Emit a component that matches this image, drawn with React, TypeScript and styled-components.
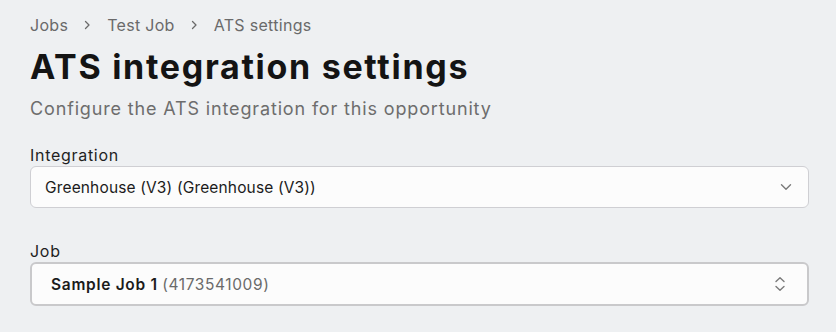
import React from 'react';
import styled, { createGlobalStyle } from 'styled-components';

const GlobalStyle = createGlobalStyle`
  html, body {
    margin: 0;
    padding: 0;
    background: #eef0f2;
    font-family: Inter, "Noto Sans", sans-serif;
    color: #1b1b1b;
  }
`;

const Page = styled.div`
  padding: 14px 27px 0 30px;
`;

const Breadcrumbs = styled.nav`
  display: flex;
  align-items: center;
  gap: 14px;
  font-size: 16px;
  letter-spacing: 0.3px;
  color: #6a6a6a;
  height: 22px;
`;

const Crumb = styled.span`
  white-space: nowrap;
`;

const Separator = styled.span`
  display: flex;
  align-items: center;
  color: #6a6a6a;
  margin: 0 2px;
`;

const Title = styled.h1`
  margin: 8px 0 0;
  font-size: 34px;
  font-weight: 700;
  letter-spacing: 1.7px;
  color: #141414;
  line-height: 46px;
`;

const Subtitle = styled.p`
  margin: 6px 0 0;
  font-size: 18px;
  letter-spacing: 0.85px;
  color: #6d6d6d;
  line-height: 26px;
`;

const Field = styled.div<{ $top: number }>`
  margin-top: ${(p) => p.$top}px;
  display: flex;
  flex-direction: column;
`;

const Label = styled.label`
  font-size: 16px;
  letter-spacing: 0.7px;
  color: #1f1f1f;
  line-height: 22px;
`;

const SelectBox = styled.div<{ $focused?: boolean }>`
  display: flex;
  align-items: center;
  justify-content: space-between;
  box-sizing: border-box;
  background: #fcfcfc;
  border: ${(p) => (p.$focused ? '2px solid #c9c9cb' : '1px solid #cfcfd3')};
  border-radius: 6px;
  height: ${(p) => (p.$focused ? 44 : 42)}px;
  padding: ${(p) => (p.$focused ? '0 21px 0 19px' : '0 16px 0 14px')};
  font-size: 15.5px;
  letter-spacing: 0.15px;
`;

const Value = styled.span`
  color: #1b1b1b;
  white-space: nowrap;
`;

const Strong = styled.span`
  font-weight: 600;
  letter-spacing: 0.7px;
`;

const Muted = styled.span`
  color: #6a6a6a;
  letter-spacing: 0.6px;
`;

const Chevron = () => (
  <svg width="12" height="8" viewBox="0 0 12 8" fill="none">
    <path d="M1.5 1.8L6 6.2L10.5 1.8" stroke="#7a7a7a" strokeWidth="1.4" strokeLinecap="round" strokeLinejoin="round" />
  </svg>
);

const UpDown = () => (
  <svg width="12" height="16" viewBox="0 0 12 16" fill="none">
    <path d="M2 5.5L6 1.8L10 5.5" stroke="#7a7a7a" strokeWidth="1.4" strokeLinecap="round" strokeLinejoin="round" />
    <path d="M2 10.5L6 14.2L10 10.5" stroke="#7a7a7a" strokeWidth="1.4" strokeLinecap="round" strokeLinejoin="round" />
  </svg>
);

const CrumbArrow = () => (
  <svg width="7" height="10" viewBox="0 0 7 10" fill="none">
    <path d="M1.5 1.5L5 5L1.5 8.5" stroke="#6a6a6a" strokeWidth="1.3" strokeLinecap="round" strokeLinejoin="round" />
  </svg>
);

export default function App() {
  return (
    <>
      <GlobalStyle />
      <Page>
        <Breadcrumbs>
          <Crumb>Jobs</Crumb>
          <Separator><CrumbArrow /></Separator>
          <Crumb>Test Job</Crumb>
          <Separator><CrumbArrow /></Separator>
          <Crumb>ATS settings</Crumb>
        </Breadcrumbs>
        <Title>ATS integration settings</Title>
        <Subtitle>Configure the ATS integration for this opportunity</Subtitle>
        <Field $top={22}>
          <Label>Integration</Label>
          <SelectBox>
            <Value>Greenhouse (V3) (Greenhouse (V3))</Value>
            <Chevron />
          </SelectBox>
        </Field>
        <Field $top={32}>
          <Label>Job</Label>
          <SelectBox $focused>
            <Value>
              <Strong>Sample Job 1</Strong> <Muted>(4173541009)</Muted>
            </Value>
            <UpDown />
          </SelectBox>
        </Field>
      </Page>
    </>
  );
}
